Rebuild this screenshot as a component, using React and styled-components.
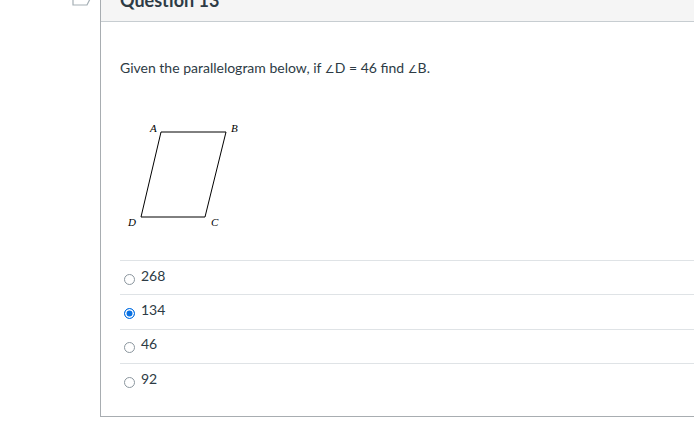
import styled, { createGlobalStyle } from 'styled-components'

const GlobalStyle = createGlobalStyle`
html, body {
  margin: 0;
  padding: 0;
  background: #fff;
  overflow: hidden;
}
body {
  font-family: Lato, "Open Sans", "Liberation Sans", sans-serif;
  color: #2d3b45;
}
`

const answers = [
  { value: '268', checked: false },
  { value: '134', checked: true },
  { value: '46', checked: false },
  { value: '92', checked: false },
]

const Bookmark = () => (
  <svg width='26' height='30' viewBox='0 0 26 30'>
    <path d='M3 1 V29 H17 L22.5 18 V1' fill='none' stroke='#a5afb5' strokeWidth='1.2' />
  </svg>
)

const Parallelogram = () => (
  <svg width='130' height='112' viewBox='0 0 130 112'>
    <polygon points='41,14 106,14 85,99 21,99' fill='none' stroke='#000' strokeWidth='1' />
    <Label x='30' y='14'>A</Label>
    <Label x='111' y='14'>B</Label>
    <Label x='8' y='108'>D</Label>
    <Label x='91' y='108'>C</Label>
  </svg>
)

const App = () => (
  <Page>
    <GlobalStyle />
    <Gutter>
      <Bookmark />
    </Gutter>
    <Panel>
      <Header>
        <Title>Question 13</Title>
      </Header>
      <Body>
        <Prompt>
          Given the parallelogram below, if <Angle>∠</Angle>D = 46 find <Angle>∠</Angle>B.
        </Prompt>
        <Figure>
          <Parallelogram />
        </Figure>
        <AnswerList>
          {answers.map((a) => (
            <Answer key={a.value}>
              <Radio $checked={a.checked} />
              <AnswerText>{a.value}</AnswerText>
            </Answer>
          ))}
        </AnswerList>
      </Body>
    </Panel>
  </Page>
)

const Page = styled.div`
display: flex;
margin-top: -24px;
width: 760px;
`

const Gutter = styled.div`
width: 100px;
flex-shrink: 0;
display: flex;
justify-content: flex-end;
padding-right: 4px;
box-sizing: border-box;
svg {
  display: block;
}
`

const Panel = styled.div`
width: 640px;
border: 1px solid #a8adb1;
border-top: none;
box-sizing: border-box;
`

const Header = styled.div`
height: 45px;
background: #f5f5f5;
border-bottom: 1px solid #c7cdd1;
padding: 0 19px;
display: flex;
align-items: flex-end;
`

const Title = styled.h2`
margin: 0 0 10px;
font-size: 18px;
font-weight: 700;
line-height: 22px;
color: #2d3b45;
`

const Body = styled.div`
padding: 36px 0 19px 19px;
`

const Prompt = styled.p`
margin: 0;
font-size: 14px;
line-height: 20px;
height: 20px;
`

const Angle = styled.span`
font-family: "DejaVu Sans", sans-serif;
font-size: 11px;
line-height: 1;
`

const Figure = styled.div`
margin-top: 40px;
margin-bottom: 30px;
svg {
  display: block;
}
`

const Label = styled.text`
font-family: "Liberation Serif", "DejaVu Serif", serif;
font-style: italic;
font-size: 11px;
fill: #000;
`

const AnswerList = styled.div`
display: flex;
flex-direction: column;
`

const Answer = styled.div`
height: 34.33px;
border-top: 1px solid #dfe3e6;
box-sizing: border-box;
display: flex;
align-items: center;
padding-left: 4px;
gap: 6px;
`

const Radio = styled.span`
width: 11px;
height: 11px;
border-radius: 50%;
box-sizing: border-box;
border: 1px solid ${(p) => (p.$checked ? '#0770e3' : '#8b969e')};
background: ${(p) => (p.$checked ? '#0770e3' : '#fff')};
box-shadow: ${(p) => (p.$checked ? 'inset 0 0 0 1.5px #fff' : 'none')};
margin-top: 3px;
flex-shrink: 0;
`

const AnswerText = styled.span`
font-size: 14px;
line-height: 20px;
margin-bottom: 4px;
`

export default App
